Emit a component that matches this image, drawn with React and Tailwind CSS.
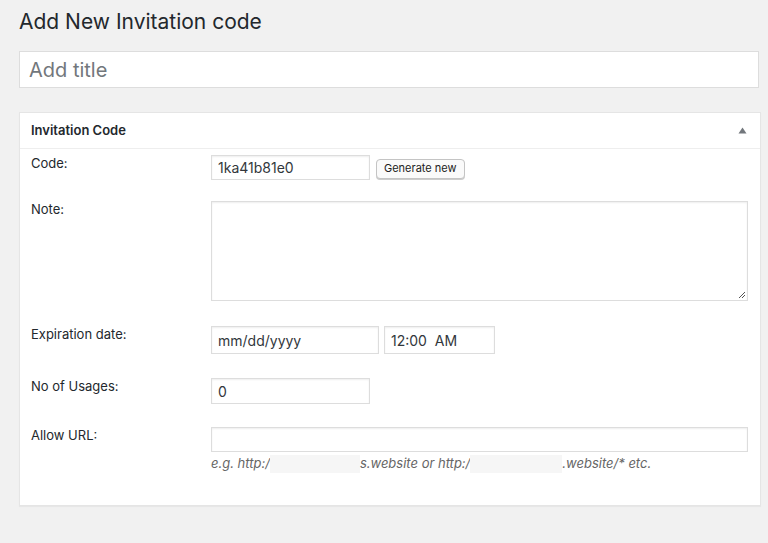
import React from 'react';

function Field({ label, children }) {
  return (
    <div className="flex">
      <div className="w-[180px] shrink-0 text-[13px] leading-[16px] text-[#23282d]">
        {label}
      </div>
      <div className="flex-1">{children}</div>
    </div>
  );
}

export default function App() {
  const inputCls =
    'border border-[#ddd] bg-white shadow-[inset_0_1px_2px_rgba(0,0,0,0.07)] px-[6px] text-[14px] text-[#32373c] flex items-center';

  return (
    <div className="min-h-[543px] bg-[#f1f1f1] px-[19px] pt-[8px] font-['Inter','Liberation_Sans',sans-serif] text-[#23282d]">
      <h1 className="text-[21px] leading-[28px] font-normal text-[#23282d]">Add New Invitation code</h1>

      <div className="mt-[15px] h-[37px] w-[740px] border border-[#ddd] bg-white flex items-center px-[9px] text-[20px] text-[#72777c]">
        Add title
      </div>

      <div className="mt-[24px] w-[742px] h-[394px] border border-[#e5e5e5] bg-white shadow-[0_1px_1px_rgba(0,0,0,0.04)]">
        <div className="h-[36px] border-b border-[#eee] flex items-center justify-between pl-[11px] pr-[13px]">
          <span className="text-[13px] font-semibold text-[#23282d]">Invitation Code</span>
          <svg width="9" height="7" viewBox="0 0 9 7">
            <path d="M4.5 0.5 L8.5 6.5 L0.5 6.5 Z" fill="#72777c" />
          </svg>
        </div>

        <div className="pl-[11px]">
          <div className="mt-[6px]">
            <Field label="Code:">
              <div className="flex items-center gap-[6px]">
                <div className={`${inputCls} w-[159px] h-[25px]`}>1ka41b81e0</div>
                <div className="mt-[2px] h-[20px] px-[7px] rounded-[4px] border border-[#c4c4c4] bg-[#fafafa] shadow-[0_1px_0_#ccc] text-[11px] text-[#222] flex items-center">
                  Generate new
                </div>
              </div>
            </Field>
          </div>

          <div className="mt-[21px]">
            <Field label="Note:">
              <div className="relative w-[537px] h-[100px] border border-[#ddd] bg-white shadow-[inset_0_1px_2px_rgba(0,0,0,0.07)]">
                <svg className="absolute right-[1px] bottom-[1px]" width="8" height="8" viewBox="0 0 8 8">
                  <path d="M7 1 L1 7 M7 4 L4 7" stroke="#555" strokeWidth="1" />
                </svg>
              </div>
            </Field>
          </div>

          <div className="mt-[25px]">
            <Field label="Expiration date:">
              <div className="flex gap-[5px]">
                <div className={`${inputCls} w-[168px] h-[28px]`}>mm/dd/yyyy</div>
                <div className={`${inputCls} w-[111px] h-[28px]`}>12:00&nbsp;&nbsp;AM</div>
              </div>
            </Field>
          </div>

          <div className="mt-[24px]">
            <Field label="No of Usages:">
              <div className={`${inputCls} w-[159px] h-[26px]`}>0</div>
            </Field>
          </div>

          <div className="mt-[23px]">
            <Field label="Allow URL:">
              <div className={`${inputCls} w-[537px] h-[25px]`}></div>
              <div className="mt-[3px] text-[13px] italic text-[#666] flex items-center h-[18px]">
                <span>e.g. http:/</span>
                <span className="inline-block w-[90px] h-[18px] bg-[#f6f6f6]" />
                <span>s.website or http:/</span>
                <span className="inline-block w-[92px] h-[18px] bg-[#f6f6f6]" />
                <span>.website/* etc.</span>
              </div>
            </Field>
          </div>
        </div>
      </div>
    </div>
  );
}
